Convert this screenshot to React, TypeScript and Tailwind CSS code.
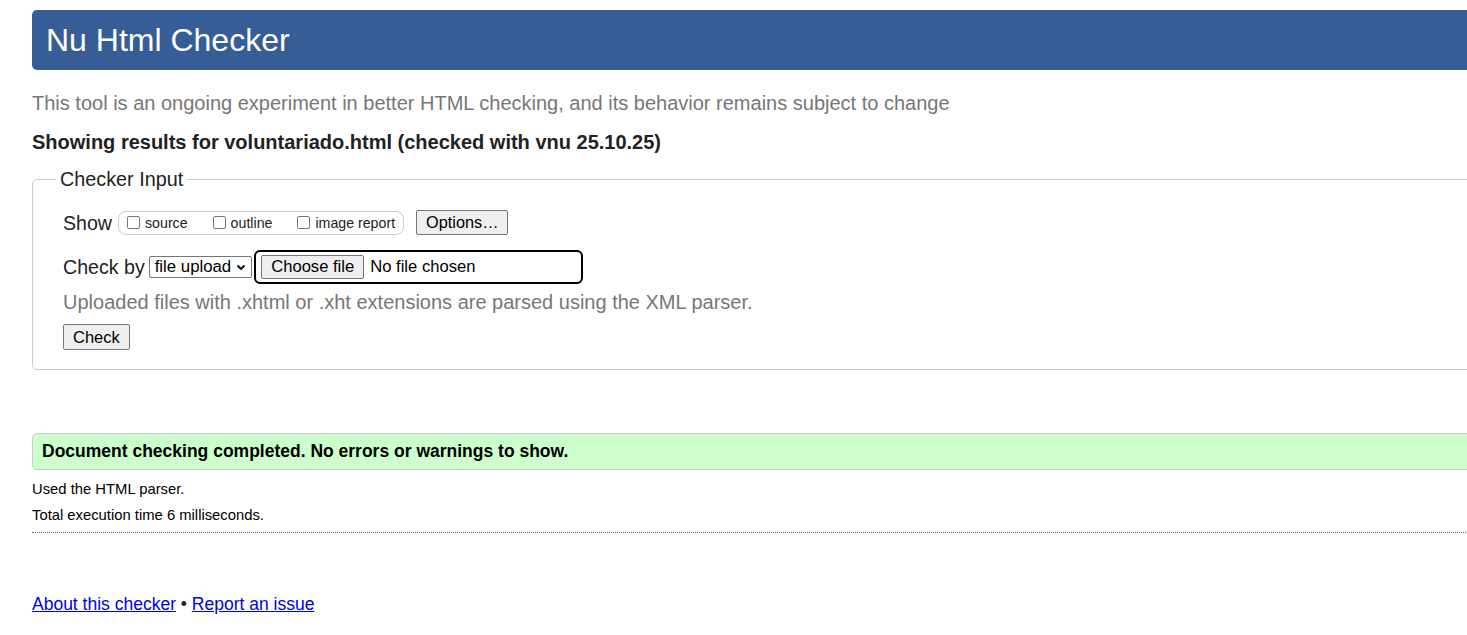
export default function App() {
  return (
    <div className="min-h-screen overflow-hidden bg-white text-[#222] font-['Liberation_Sans',Arial,sans-serif]">
      <div className="w-[1520px] pl-8 pt-[10px]">
        <header className="flex h-[60px] items-center rounded-[5px] bg-[#365d95] px-[14px]">
          <h1 className="text-[32px] leading-none text-white">Nu Html Checker</h1>
        </header>

        <p className="mt-[23px] text-[20px] leading-[21px] text-[#777]">
          This tool is an ongoing experiment in better HTML checking, and its behavior remains subject to change
        </p>
        <p className="mt-[17px] text-[20px] font-bold leading-[22px] text-[#222]">
          Showing results for voluntariado.html (checked with vnu 25.10.25)
        </p>

        <fieldset className="mt-[15px] rounded-[5px] border border-[#ccc] pr-[30px] pb-[19px] pl-[30px]">
          <legend className="-ml-[7px] px-[4px] text-[19.8px] leading-[22px] text-[#222]">Checker Input</legend>

          <div className="mt-[20px] flex items-center">
            <span className="mr-[6px] text-[19.6px] leading-[22px]">Show</span>
            <div className="flex h-[24px] items-center rounded-[8px] border border-[#ccc] pl-[8px] pr-[8px]">
              <Box />
              <span className="ml-[5px] mt-[2px] text-[14.2px]">source</span>
              <span className="ml-[25px]" />
              <Box />
              <span className="ml-[5px] mt-[2px] text-[14.2px]">outline</span>
              <span className="ml-[25px]" />
              <Box />
              <span className="ml-[5px] mt-[2px] text-[14.2px]">image report</span>
            </div>
            <button className="ml-[12px] h-[25px] rounded-[2px] border border-[#767676] bg-[#efefef] px-[9px] text-[16.3px] leading-none text-black">
              Options…
            </button>
          </div>

          <div className="mt-[15px] flex items-center">
            <span className="mr-[4px] text-[19.6px] leading-[22px]">Check by</span>
            <div className="flex h-[22px] items-center rounded-[2px] border border-[#767676] bg-white pl-[5px] pr-[4px] text-[16.8px] text-black">
              <span>file upload</span>
              <svg width="12" height="12" viewBox="0 0 12 12" className="ml-[4px]">
                <path d="M2.5 4.5 L6 8 L9.5 4.5" fill="none" stroke="#000" strokeWidth="1.8" />
              </svg>
            </div>
            <div className="ml-[2px] flex h-[34px] w-[329px] items-center rounded-[6px] border-2 border-black pl-[5px]">
              <span className="flex h-[24px] items-center rounded-[2px] border border-[#767676] bg-[#efefef] px-[9px] text-[16.6px] text-black">
                Choose file
              </span>
              <span className="ml-[6px] text-[16.6px] text-black">No file chosen</span>
            </div>
          </div>

          <p className="mt-[7px] text-[20px] leading-[22px] text-[#777]">
            Uploaded files with .xhtml or .xht extensions are parsed using the XML parser.
          </p>

          <button className="mt-[11px] h-[26px] rounded-[2px] border border-[#767676] bg-[#efefef] px-[9px] text-[16.5px] leading-none text-black">
            Check
          </button>
        </fieldset>

        <div className="mt-[63px] flex h-[37px] items-center rounded-[5px] border border-[#ccc] bg-[#ccffcc] pl-[9px]">
          <p className="text-[17.5px] font-bold text-black">Document checking completed. No errors or warnings to show.</p>
        </div>

        <p className="mt-[10px] text-[14.8px] leading-[18px] text-black">Used the HTML parser.</p>
        <p className="mt-[8px] text-[14.8px] leading-[18px] text-black">Total execution time 6 milliseconds.</p>
        <div className="mt-[8px] border-b border-dotted border-[#666]" />

        <p className="mt-[58px] text-[17.5px] text-[#222]">
          <a href="#" className="text-[#0000ee] underline">About this checker</a>
          {" • "}
          <a href="#" className="text-[#0000ee] underline">Report an issue</a>
        </p>
      </div>
    </div>
  );
}

function Box() {
  return <span className="inline-block h-[13px] w-[13px] rounded-[2px] border border-[#767676] bg-white" />;
}
